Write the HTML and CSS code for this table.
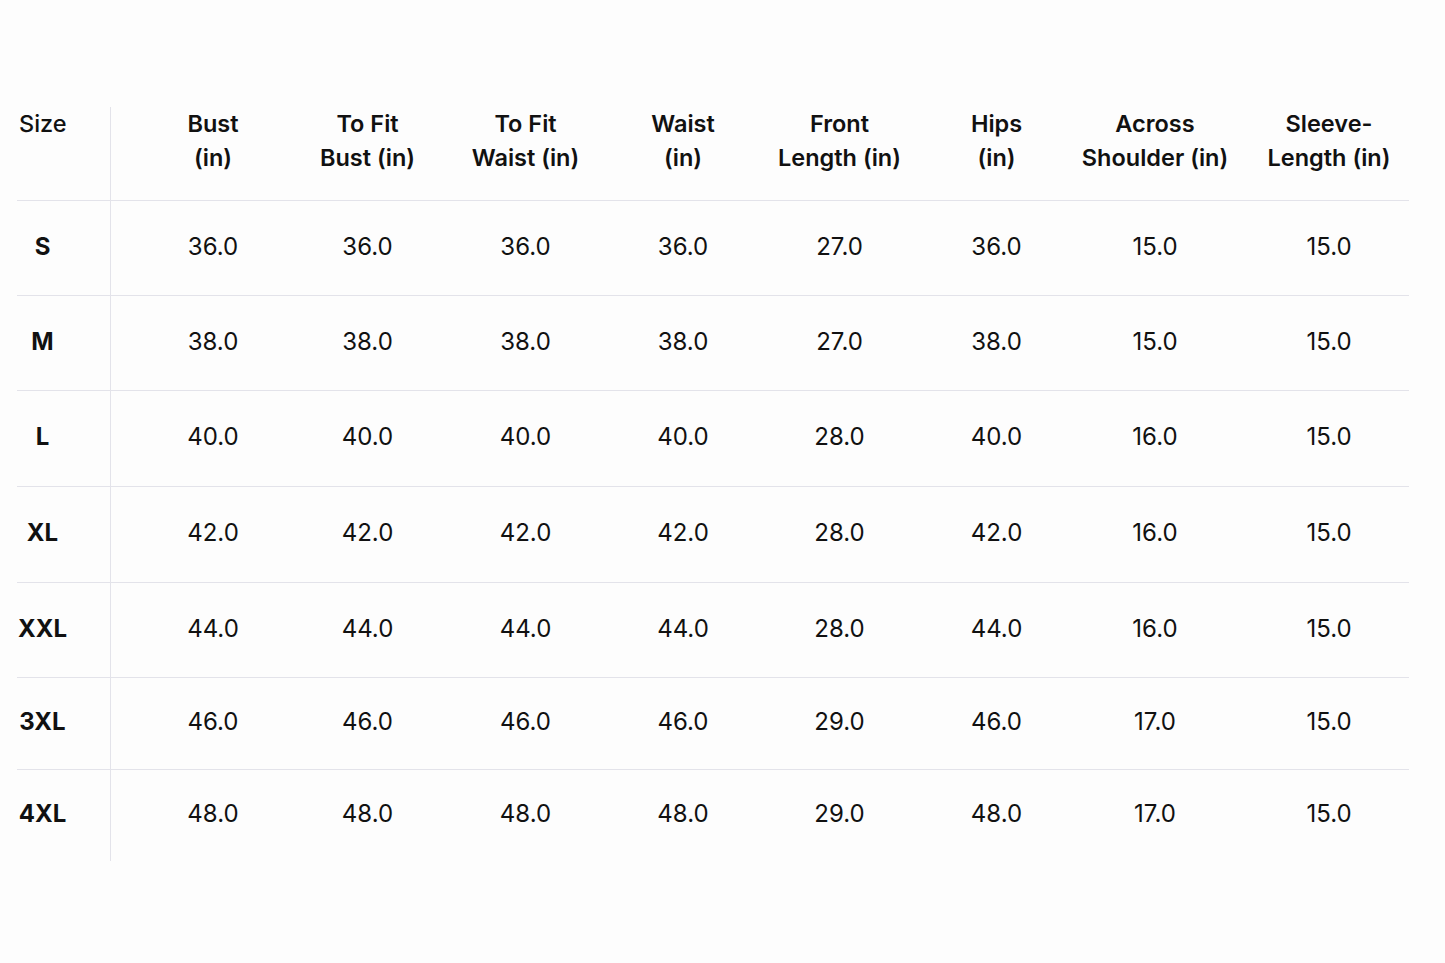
FILE: index.html
```html
<!DOCTYPE html>
<html lang="en">
<head>
<meta charset="utf-8">
<title>Size Chart</title>
<link rel="stylesheet" href="styles.css">
</head>
<body>
<div class="chart">
  <div class="row head">
    <div class="cell size-h">Size</div>
    <div class="cell c1">Bust<br>(in)</div>
    <div class="cell">To Fit<br>Bust (in)</div>
    <div class="cell">To Fit<br>Waist (in)</div>
    <div class="cell">Waist<br>(in)</div>
    <div class="cell">Front<br>Length (in)</div>
    <div class="cell">Hips<br>(in)</div>
    <div class="cell">Across<br>Shoulder (in)</div>
    <div class="cell c8">Sleeve-<br>Length (in)</div>
  </div>
  <div class="row">
    <div class="cell size"><span>S</span></div>
    <div class="cell c1">36.0</div><div class="cell">36.0</div><div class="cell">36.0</div><div class="cell">36.0</div><div class="cell">27.0</div><div class="cell">36.0</div><div class="cell">15.0</div><div class="cell c8">15.0</div>
  </div>
  <div class="row">
    <div class="cell size"><span>M</span></div>
    <div class="cell c1">38.0</div><div class="cell">38.0</div><div class="cell">38.0</div><div class="cell">38.0</div><div class="cell">27.0</div><div class="cell">38.0</div><div class="cell">15.0</div><div class="cell c8">15.0</div>
  </div>
  <div class="row tall">
    <div class="cell size"><span>L</span></div>
    <div class="cell c1">40.0</div><div class="cell">40.0</div><div class="cell">40.0</div><div class="cell">40.0</div><div class="cell">28.0</div><div class="cell">40.0</div><div class="cell">16.0</div><div class="cell c8">15.0</div>
  </div>
  <div class="row tall">
    <div class="cell size"><span>XL</span></div>
    <div class="cell c1">42.0</div><div class="cell">42.0</div><div class="cell">42.0</div><div class="cell">42.0</div><div class="cell">28.0</div><div class="cell">42.0</div><div class="cell">16.0</div><div class="cell c8">15.0</div>
  </div>
  <div class="row">
    <div class="cell size"><span>XXL</span></div>
    <div class="cell c1">44.0</div><div class="cell">44.0</div><div class="cell">44.0</div><div class="cell">44.0</div><div class="cell">28.0</div><div class="cell">44.0</div><div class="cell">16.0</div><div class="cell c8">15.0</div>
  </div>
  <div class="row short">
    <div class="cell size"><span>3XL</span></div>
    <div class="cell c1">46.0</div><div class="cell">46.0</div><div class="cell">46.0</div><div class="cell">46.0</div><div class="cell">29.0</div><div class="cell">46.0</div><div class="cell">17.0</div><div class="cell c8">15.0</div>
  </div>
  <div class="row last">
    <div class="cell size"><span>4XL</span></div>
    <div class="cell c1">48.0</div><div class="cell">48.0</div><div class="cell">48.0</div><div class="cell">48.0</div><div class="cell">29.0</div><div class="cell">48.0</div><div class="cell">17.0</div><div class="cell c8">15.0</div>
  </div>
</div>
</body>
</html>
```
FILE: styles.css
```css
html, body {
  margin: 0;
  padding: 0;
  background: #fdfdfd;
}
body {
  font-family: "Inter", "Liberation Sans", sans-serif;
  color: #111111;
  padding: 107px 0 0 17px;
}
.chart {
  width: 1392px;
}
.row {
  display: grid;
  grid-template-columns: 94px 178px 157px 159px 156px 157px 157px 160px 174px;
  height: 95px;
  border-bottom: 1px solid #e3e3ea;
  box-sizing: border-box;
}
.row.head {
  height: 94px;
}
.row.tall {
  height: 96px;
}
.row.short {
  height: 92px;
}
.row.last {
  border-bottom: none;
  height: 91px;
}
.cell {
  display: flex;
  align-items: center;
  justify-content: center;
  text-align: center;
  font-size: 24px;
  font-weight: 400;
  padding-bottom: 4px;
}
.cell.c1 { padding-left: 26px; }
.cell.c8 { padding-left: 14px; }
.head .cell {
  align-items: flex-start;
  font-size: 23.5px;
  font-weight: 600;
  line-height: 34px;
  padding-bottom: 0;
}
.head .cell.size-h {
  justify-content: flex-start;
  font-weight: 500;
  padding-left: 2px;
}
.cell.size, .cell.size-h {
  border-right: 1px solid #e3e3ea;
}
.cell.size {
  justify-content: flex-start;
}
.cell.size span {
  width: 51px;
  text-align: center;
  font-weight: 700;
}
```
